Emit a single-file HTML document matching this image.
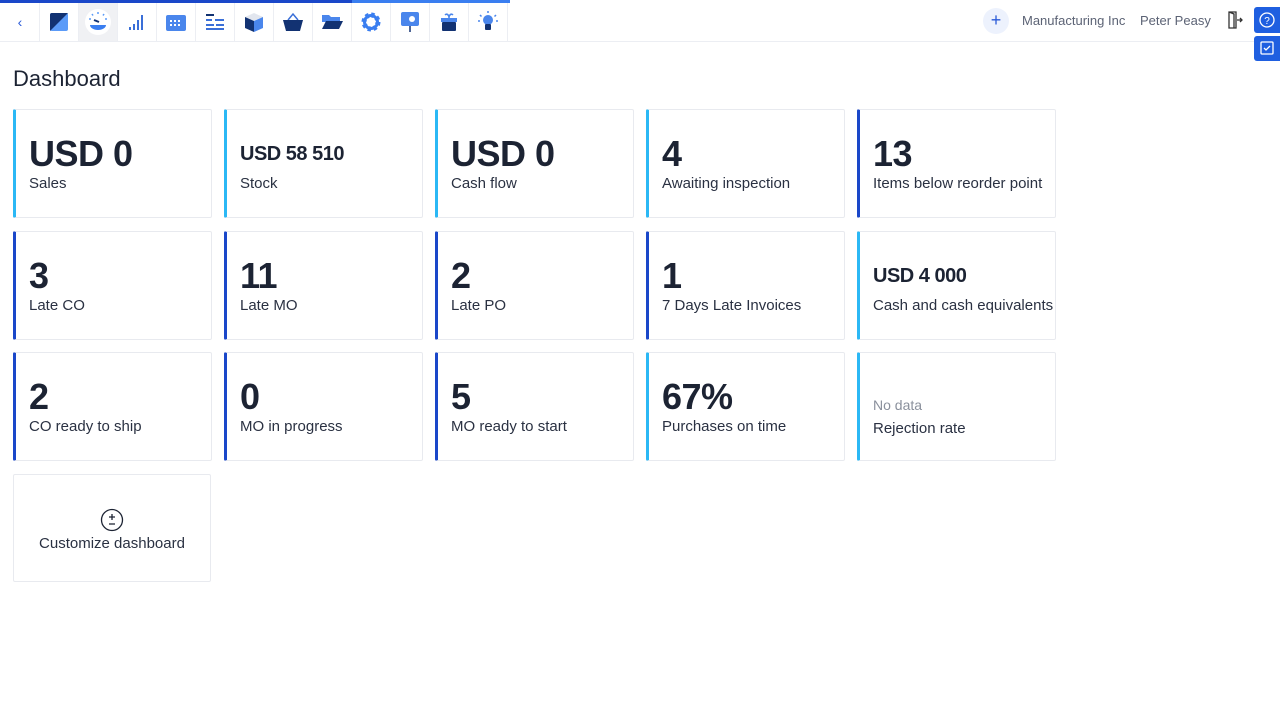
<!DOCTYPE html>
<html><head><meta charset="utf-8"><style>
*{box-sizing:border-box;margin:0;padding:0}
body{width:1280px;height:720px;background:#fff;font-family:"Liberation Sans",sans-serif;color:#1c2333;position:relative;overflow:hidden}
.top{position:absolute;left:0;top:0;width:1280px;height:42px;border-bottom:1px solid #eceef3}
.bar{position:absolute;top:0;height:3px}
.tab{position:absolute;top:3px;width:39px;height:38px;border-right:1px solid #eceef3;display:flex;align-items:center;justify-content:center}
.card{position:absolute;width:199px;height:109px;border:1px solid #e8eaef;border-left:3px solid #2bb8f5;border-radius:2px;padding-left:13px}
.card.d{border-left-color:#1a47c9}
.n{position:absolute;left:13px;top:23px;font-size:36px;font-weight:bold;letter-spacing:-0.5px}
.n.s{font-size:20px;top:33px}
.l{position:absolute;left:13px;top:65px;font-size:15px;color:#2a3142}
h1{position:absolute;left:13px;top:66px;font-size:22px;font-weight:normal}
</style></head><body>
<div class="top">
<div class="bar" style="left:0;width:352px;background:#1a47c9"></div>
<div class="bar" style="left:352px;width:158px;background:#3a7ef0"></div>
<div class="tab" style="left:1px;color:#2a5ad8;font-size:14px">‹</div>
<div class="tab" style="left:40px"><svg width="18" height="18"><rect width="18" height="18" rx="2" fill="#5b9bf8"/><path d="M0 18V2a2 2 0 012-2h16z" fill="#123272"/></svg></div>
<div class="tab" style="left:79px;background:#f0f1f4"><svg width="28" height="28"><circle cx="14" cy="14" r="13" fill="#fff"/><path d="M6 17h16a8 5 0 01-16 0z" fill="#3a7ef0"/><path d="M10 12l5 2" stroke="#123272" stroke-width="2"/><g stroke="#5b9bf8" stroke-width="1.5"><path d="M14 4v2M8 6l1 1.5M20 6l-1 1.5M5 11h2M21 11h2"/></g></svg></div>
<div class="tab" style="left:118px"><svg width="18" height="18" fill="#3a6fd8"><rect x="1" y="14" width="2" height="3"/><rect x="5" y="11" width="2" height="6"/><rect x="9" y="7" width="2" height="10"/><rect x="13" y="2" width="2" height="15"/></svg></div>
<div class="tab" style="left:157px"><svg width="20" height="18"><rect y="2" width="20" height="16" rx="2" fill="#4a86ec"/><g fill="#fff"><rect x="4" y="7" width="2" height="2"/><rect x="8" y="7" width="2" height="2"/><rect x="12" y="7" width="2" height="2"/><rect x="4" y="11" width="2" height="2"/><rect x="8" y="11" width="2" height="2"/><rect x="12" y="11" width="2" height="2"/></g></svg></div>
<div class="tab" style="left:196px"><svg width="18" height="18" fill="#3a6fd8"><rect x="0" y="1" width="8" height="2" fill="#123272"/><rect x="0" y="6" width="6" height="2"/><rect x="0" y="11" width="8" height="2"/><rect x="10" y="11" width="8" height="2"/><rect x="0" y="15" width="18" height="2"/><rect x="9" y="6" width="9" height="2"/></svg></div>
<div class="tab" style="left:235px"><svg width="20" height="20"><path d="M1 5l9-4 9 4-9 4z" fill="#e2e6ee"/><path d="M1 5l9 4v11l-9-4z" fill="#123272"/><path d="M19 5l-9 4v11l9-4z" fill="#4a86ec"/></svg></div>
<div class="tab" style="left:274px"><svg width="22" height="20"><path d="M6 8l5-6 5 6" stroke="#3a6fd8" stroke-width="1.5" fill="none"/><path d="M1 8h20l-3 11H4z" fill="#123272"/></svg></div>
<div class="tab" style="left:313px"><svg width="22" height="18"><path d="M1 2h7l2 2h9v5H1z" fill="#4a86ec"/><path d="M1 16l4-8h17l-4 8z" fill="#123272"/></svg></div>
<div class="tab" style="left:352px"><svg width="20" height="20"><circle cx="10" cy="10" r="7" fill="none" stroke="#3a7ef0" stroke-width="5" stroke-dasharray="3 2.5"/><circle cx="10" cy="10" r="6.5" fill="none" stroke="#3a7ef0" stroke-width="3"/></svg></div>
<div class="tab" style="left:391px"><svg width="20" height="22"><rect x="1" y="1" width="18" height="14" rx="2" fill="#4a86ec"/><circle cx="12" cy="8" r="3" fill="#fff"/><path d="M10 15v6" stroke="#123272" stroke-width="1.5"/></svg></div>
<div class="tab" style="left:430px"><svg width="18" height="20"><path d="M5 3c2-2 4 0 4 3M13 3c-2-2-4 0-4 3" stroke="#4a86ec" fill="none" stroke-width="1.5"/><rect x="1" y="6" width="16" height="4" fill="#4a86ec"/><rect x="2" y="10" width="14" height="9" rx="1" fill="#123272"/></svg></div>
<div class="tab" style="left:469px"><svg width="22" height="22"><circle cx="11" cy="9" r="5" fill="#4a86ec"/><rect x="8" y="13" width="6" height="6" rx="1" fill="#123272"/><g stroke="#4a86ec" stroke-width="1.5"><path d="M11 0v2M3 4l1.5 1.5M19 4l-1.5 1.5M1 10h2M19 10h2"/></g></svg></div>
<div style="position:absolute;left:983px;top:8px;width:26px;height:26px;border-radius:50%;background:#edf2fd;color:#2a5ad8;text-align:center;line-height:25px;font-size:18px">+</div>
<div style="position:absolute;left:1022px;top:13px;font-size:13px;color:#5c6375">Manufacturing Inc</div>
<div style="position:absolute;left:1140px;top:13px;font-size:13px;color:#5c6375">Peter Peasy</div>
<svg style="position:absolute;left:1227px;top:11px" width="16" height="18"><path d="M2 1h7v16H2zM2 1l5 2v14" fill="none" stroke="#333" stroke-width="1.3"/><path d="M10 9h5M13 7l2 2-2 2" stroke="#333" fill="none" stroke-width="1.3"/></svg>
</div>
<div style="position:absolute;left:1254px;top:7px;width:26px;height:26px;background:#1f5fe0;border-radius:3px 0 0 3px"><svg width="26" height="26"><circle cx="13" cy="13" r="7" fill="none" stroke="#fff" stroke-width="1.3"/><text x="13" y="17" font-size="10" fill="#fff" text-anchor="middle" font-family="Liberation Sans">?</text></svg></div>
<div style="position:absolute;left:1254px;top:36px;width:26px;height:25px;background:#1f5fe0;border-radius:3px 0 0 3px"><svg width="26" height="25"><rect x="7" y="6" width="12" height="12" rx="1" fill="none" stroke="#fff" stroke-width="1.3"/><path d="M10 12l2 2 4-4" stroke="#fff" fill="none" stroke-width="1.3"/></svg></div>
<h1>Dashboard</h1>

<div class="card" style="left:13px;top:109px"><div class="n">USD 0</div><div class="l">Sales</div></div>
<div class="card" style="left:224px;top:109px"><div class="n s">USD 58 510</div><div class="l">Stock</div></div>
<div class="card" style="left:435px;top:109px"><div class="n">USD 0</div><div class="l">Cash flow</div></div>
<div class="card" style="left:646px;top:109px"><div class="n">4</div><div class="l">Awaiting inspection</div></div>
<div class="card d" style="left:857px;top:109px"><div class="n">13</div><div class="l">Items below reorder point</div></div>

<div class="card d" style="left:13px;top:231px"><div class="n">3</div><div class="l">Late CO</div></div>
<div class="card d" style="left:224px;top:231px"><div class="n">11</div><div class="l">Late MO</div></div>
<div class="card d" style="left:435px;top:231px"><div class="n">2</div><div class="l">Late PO</div></div>
<div class="card d" style="left:646px;top:231px"><div class="n">1</div><div class="l">7 Days Late Invoices</div></div>
<div class="card" style="left:857px;top:231px"><div class="n s">USD 4 000</div><div class="l">Cash and cash equivalents</div></div>

<div class="card d" style="left:13px;top:352px"><div class="n">2</div><div class="l">CO ready to ship</div></div>
<div class="card d" style="left:224px;top:352px"><div class="n">0</div><div class="l">MO in progress</div></div>
<div class="card d" style="left:435px;top:352px"><div class="n">5</div><div class="l">MO ready to start</div></div>
<div class="card" style="left:646px;top:352px"><div class="n">67%</div><div class="l">Purchases on time</div></div>
<div class="card" style="left:857px;top:352px"><div class="l" style="top:44px;font-size:14px;color:#8a909c">No data</div><div class="l" style="top:67px">Rejection rate</div></div>

<div style="position:absolute;left:13px;top:474px;width:198px;height:108px;border:1px solid #e8eaef;border-radius:2px;text-align:center">
<svg style="position:absolute;left:86px;top:33px" width="24" height="24"><circle cx="12" cy="12" r="10.5" fill="none" stroke="#1c2333" stroke-width="1.3"/><path d="M12 6v6M9 9h6M9 16h6" stroke="#1c2333" stroke-width="1.3"/></svg>
<div style="position:absolute;left:0;right:0;top:60px;font-size:15px;color:#2a3142">Customize dashboard</div></div>
</body></html>
